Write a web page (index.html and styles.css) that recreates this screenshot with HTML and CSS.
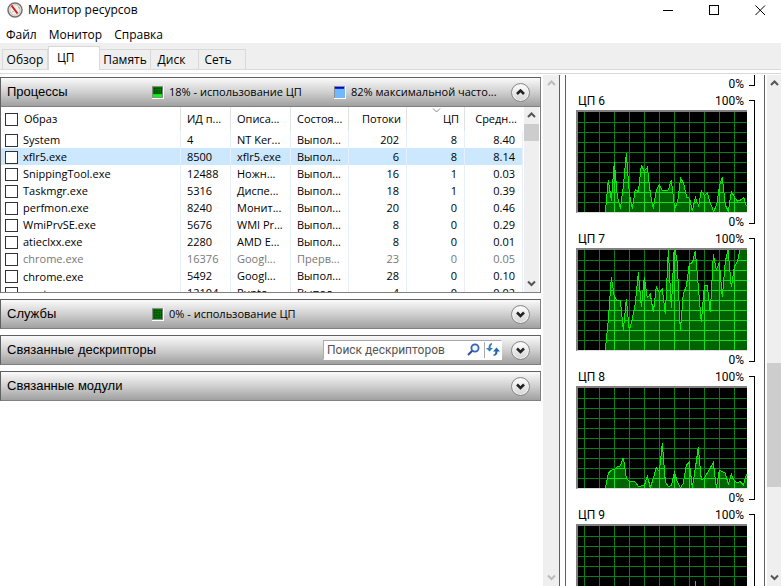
FILE: index.html
```
<!DOCTYPE html>
<html lang="ru">
<head>
<meta charset="utf-8">
<title>Монитор ресурсов</title>
<link rel="stylesheet" href="styles.css">
</head>
<body>
<svg class="defs" aria-hidden="true">
  <defs>
    <path id="grid" d="M19.5 0V300M64.5 0V300M109.5 0V300M154.5 0V300M199.5 0V300M244.5 0V300M289.5 0V300M334.5 0V300M379.5 0V300M424.5 0V300M469.5 0V300M0 31.5H507M0 61.5H507M0 91.5H507M0 121.5H507M0 151.5H507M0 181.5H507M0 211.5H507M0 241.5H507M0 271.5H507"/>
    <path id="down" d="M1 1.5L4.500 5L8 1.500"/>
    <path id="up" d="M1 5L4.500 1.500L8 5"/>
  </defs>
</svg>

<header class="titlebar">
  <svg class="logo" viewBox="0 0 16 16" aria-hidden="true">
    <circle cx="8" cy="8" r="7" fill="#f4f1ee" stroke="#77716f" stroke-width="1.500"/>
    <circle cx="8" cy="8" r="5.200" fill="none" stroke="#cfc4bc"/>
    <path d="M4.500 3.500L10.500 11.500" stroke="#d01c1c" stroke-width="2"/>
    <path d="M5 10.500L6.500 9M11.500 5L12.500 7" stroke="#a9a29c"/>
  </svg>
  <h1>Монитор ресурсов</h1>
  <div class="window-buttons">
    <button aria-label="Свернуть"><svg viewBox="0 0 11 11"><path d="M0 5.500H10"/></svg></button>
    <button aria-label="Развернуть"><svg viewBox="0 0 11 11"><path d="M.5.5H9.500V9.500H.5Z"/></svg></button>
    <button aria-label="Закрыть"><svg viewBox="0 0 11 11"><path d="M.5.5L10 10M10 .5L.5 10" shape-rendering="auto"/></svg></button>
  </div>
</header>

<nav class="menu">
  <button>Файл</button>
  <button>Монитор</button>
  <button>Справка</button>
</nav>

<div class="tabs" role="tablist">
  <button class="tab tab-overview" role="tab">Обзор</button>
  <button class="tab active" role="tab" aria-selected="true">ЦП</button>
  <button class="tab" role="tab">Память</button>
  <button class="tab" role="tab">Диск</button>
  <button class="tab" role="tab">Сеть</button>
</div>
<div class="tab-edge"></div>

<main>
  <div class="groups">
    <section class="group">
      <div class="group-head">
        <h2>Процессы</h2>
        <span class="stat cpu"><svg class="meter" viewBox="0 0 12 13"><path fill="#8b8b8b" d="M0 0H12V13H0Z"/><path fill="#008000" d="M1 1H11V9H1Z"/><path class="dots" d="M2 2.500H11M2 4.500H11M2 6.500H11M2 8.500H11"/><path fill="#00ff00" d="M1 9H11V12H1Z"/></svg>18% - использование ЦП</span>
        <span class="stat"><svg class="meter" viewBox="0 0 12 13"><path fill="#8b8b8b" d="M0 0H12V13H0Z"/><path fill="#70b8ff" d="M1 1H12V13H1Z"/><path fill="#0000d8" d="M1 1H11V3H1Z"/></svg>82% максимальной часто...</span>
        <button class="round" aria-label="Свернуть процессы"><svg viewBox="0 0 9 7"><use href="#up"/></svg></button>
      </div>
      <div class="list">
        <table>
          <colgroup><col><col class="c-pid"><col class="c-desc"><col class="c-num"><col class="c-num"><col class="c-num"><col class="c-num"></colgroup>
          <thead>
            <tr><th><input type="checkbox" aria-label="Все процессы"><span>Образ</span></th><th>ИД п...</th><th>Описа...</th><th>Состоя...</th><th class="n">Потоки</th><th class="n sorted">ЦП<svg viewBox="0 0 9 7"><use href="#down"/></svg></th><th class="n">Средн...</th></tr>
          </thead>
          <tbody>
            <tr><td><input type="checkbox" id="p1"><label for="p1">System</label></td><td>4</td><td>NT Ker...</td><td>Выпол...</td><td class="n">202</td><td class="n">8</td><td class="n">8.40</td></tr>
            <tr class="selected"><td><input type="checkbox" id="p2"><label for="p2">xflr5.exe</label></td><td>8500</td><td>xflr5.exe</td><td>Выпол...</td><td class="n">6</td><td class="n">8</td><td class="n">8.14</td></tr>
            <tr><td><input type="checkbox" id="p3"><label for="p3">SnippingTool.exe</label></td><td>12488</td><td>Ножн...</td><td>Выпол...</td><td class="n">16</td><td class="n">1</td><td class="n">0.03</td></tr>
            <tr><td><input type="checkbox" id="p4"><label for="p4">Taskmgr.exe</label></td><td>5316</td><td>Диспе...</td><td>Выпол...</td><td class="n">18</td><td class="n">1</td><td class="n">0.39</td></tr>
            <tr><td><input type="checkbox" id="p5"><label for="p5">perfmon.exe</label></td><td>8240</td><td>Монит...</td><td>Выпол...</td><td class="n">20</td><td class="n">0</td><td class="n">0.46</td></tr>
            <tr><td><input type="checkbox" id="p6"><label for="p6">WmiPrvSE.exe</label></td><td>5676</td><td>WMI Pr...</td><td>Выпол...</td><td class="n">8</td><td class="n">0</td><td class="n">0.29</td></tr>
            <tr><td><input type="checkbox" id="p7"><label for="p7">atieclxx.exe</label></td><td>2280</td><td>AMD E...</td><td>Выпол...</td><td class="n">8</td><td class="n">0</td><td class="n">0.01</td></tr>
            <tr class="suspended"><td><input type="checkbox" id="p8"><label for="p8">chrome.exe</label></td><td>16376</td><td>Googl...</td><td>Прерв...</td><td class="n">23</td><td class="n">0</td><td class="n">0.05</td></tr>
            <tr><td><input type="checkbox" id="p9"><label for="p9">chrome.exe</label></td><td>5492</td><td>Googl...</td><td>Выпол...</td><td class="n">28</td><td class="n">0</td><td class="n">0.10</td></tr>
            <tr><td><input type="checkbox" id="p10"><label for="p10">punto.exe</label></td><td>12104</td><td>Punto...</td><td>Выпол...</td><td class="n">4</td><td class="n">0</td><td class="n">0.02</td></tr>
          </tbody>
        </table>
        <div class="scroll list-scroll">
          <svg viewBox="0 0 9 7"><use href="#up"/></svg>
          <div class="thumb"></div>
          <svg class="end" viewBox="0 0 9 7"><use href="#down"/></svg>
        </div>
      </div>
    </section>

    <section class="group">
      <div class="group-head">
        <h2>Службы</h2>
        <span class="stat cpu"><svg class="meter" viewBox="0 0 12 13"><path fill="#8b8b8b" d="M0 0H12V13H0Z"/><path fill="#008000" d="M1 1H11V12H1Z"/><path class="dots" d="M2 2.500H11M2 4.500H11M2 6.500H11M2 8.500H11M2 10.500H11"/></svg>0% - использование ЦП</span>
        <button class="round" aria-label="Развернуть службы"><svg viewBox="0 0 9 7"><use href="#down"/></svg></button>
      </div>
    </section>

    <section class="group">
      <div class="group-head">
        <h2>Связанные дескрипторы</h2>
        <div class="search">
          <input type="text" placeholder="Поиск дескрипторов" aria-label="Поиск дескрипторов">
          <button aria-label="Найти"><svg viewBox="0 0 14 14"><circle cx="8" cy="5" r="3.600" fill="#eef5ff" stroke="#3563b5" stroke-width="1.800"/><path d="M5.300 7.800L1 12" stroke="#2d4f9e" stroke-width="2"/></svg></button>
          <button class="refresh" aria-label="Обновить"><svg viewBox="0 0 14 14"><path fill="#2f7fc4" d="M6 0V1.500Q4.500 2 4.500 5H7L3.500 8.500L0 5H2.500Q2.500 .5 6 0Z"/><path fill="#2464b0" d="M7.500 13V11.500Q9.500 11 9.500 8.500H7L10.500 4.500L14 8.500H11.500Q11.500 12.500 7.500 13Z"/></svg></button>
        </div>
        <button class="round" aria-label="Развернуть дескрипторы"><svg viewBox="0 0 9 7"><use href="#down"/></svg></button>
      </div>
    </section>

    <section class="group">
      <div class="group-head">
        <h2>Связанные модули</h2>
        <button class="round" aria-label="Развернуть модули"><svg viewBox="0 0 9 7"><use href="#down"/></svg></button>
      </div>
    </section>
  </div>

  <div class="scroll idle"><svg viewBox="0 0 9 7"><use href="#up"/></svg><svg class="end" viewBox="0 0 9 7"><use href="#down"/></svg></div>

  <aside class="charts">
    <div class="chart-tail"><span>0%</span><i class="bracket"></i></div>

    <figure class="chart">
      <figcaption><span>ЦП 6</span><span>100%</span></figcaption>
      <svg class="plot" viewBox="0 0 507 300" preserveAspectRatio="none">
        <clipPath id="a6"><path id="l6" transform="translate(-54 -126)" d="M136 426L145 330L154 392L163 277L172 380L181 416L190 350L199 250L208 370L217 416L226 358L235 365L244 286L253 303L262 292L271 370L280 416L289 360L298 344L307 363L325 360L334 330L344 416L353 395L362 325L371 340L380 382L389 385L397 424L406 382L416 408L424 362L433 376L442 368L451 400L461 424L470 405L479 345L487 322L496 405L505 424L514 365L524 382L533 394L542 390L551 382L558 405L564 405V430H136Z"/></clipPath>
        <use href="#grid" class="grid"/><g clip-path="url(#a6)"><path class="area" d="M0 0H507V300H0Z"/><use href="#grid" class="grid lit"/></g><use href="#l6" class="line"/>
      </svg>
      <span class="zero">0%</span><i class="bracket"></i>
    </figure>

    <figure class="chart">
      <figcaption><span>ЦП 7</span><span>100%</span></figcaption>
      <svg class="plot" viewBox="0 0 507 300" preserveAspectRatio="none">
        <clipPath id="a7"><path id="l7" transform="translate(-54 -105)" d="M136 405L145 315L154 187L163 245L172 257L181 257L190 345L199 252L208 348L217 310L226 265L235 172L244 275L253 187L262 248L271 238L280 292L289 214L298 233L307 222L316 298L325 105L334 280L343 90L352 145L361 348L370 235L379 215L388 147L397 143L406 107L415 215L424 322L433 212L442 212L451 292L460 118L469 165L478 142L487 247L496 140L504 103L514 217L523 155L532 140L541 100H564V410H136Z"/></clipPath>
        <use href="#grid" class="grid"/><g clip-path="url(#a7)"><path class="area" d="M0 0H507V300H0Z"/><use href="#grid" class="grid lit"/></g><use href="#l7" class="line"/>
      </svg>
      <span class="zero">0%</span><i class="bracket"></i>
    </figure>

    <figure class="chart">
      <figcaption><span>ЦП 8</span><span>100%</span></figcaption>
      <svg class="plot" viewBox="0 0 507 300" preserveAspectRatio="none">
        <clipPath id="a8"><path id="l8" transform="translate(-54 -99)" d="M136 399L145 355L154 346L163 343L172 335L181 333L190 308L199 370L208 379L226 381L235 394L253 392L262 363L271 398L280 370L289 337L298 350L307 265L316 380L325 395L334 392L343 352L352 380L361 398L370 385L379 330L388 322L397 398L406 340L415 277L424 375L433 370L460 322L469 398L478 346L496 355L505 388L514 358L523 378L532 383L541 380L550 390L558 363L564 350V404H136Z"/></clipPath>
        <use href="#grid" class="grid"/><g clip-path="url(#a8)"><path class="area" d="M0 0H507V300H0Z"/><use href="#grid" class="grid lit"/></g><use href="#l8" class="line"/>
      </svg>
      <span class="zero">0%</span><i class="bracket"></i>
    </figure>

    <figure class="chart">
      <figcaption><span>ЦП 9</span><span>100%</span></figcaption>
      <svg class="plot" viewBox="0 0 507 300" preserveAspectRatio="none">
        <use href="#grid" class="grid"/><path class="line" d="M345 290L352 166L360 290"/>
      </svg>
      <span class="zero">0%</span><i class="bracket"></i>
    </figure>
  </aside>

  <div class="scroll page-scroll"><svg viewBox="0 0 9 7"><use href="#up"/></svg><div class="thumb"></div><svg class="end" viewBox="0 0 9 7"><use href="#down"/></svg></div>
</main>
</body>
</html>
```
FILE: styles.css
```
* { box-sizing: border-box; }

body {
  margin: 0;
  height: 100vh;
  overflow: hidden;
  display: flex;
  flex-direction: column;
  background: #fff;
  color: #000;
  font: 12px/16px "Open Sans", "Noto Sans", sans-serif;
}

button, input { font: inherit; color: inherit; margin: 0; padding: 0; }
button { border: 0; background: none; }
h1, h2, figure { margin: 0; font-size: inherit; font-weight: normal; }
svg { display: block; flex: none; }
.defs { position: absolute; width: 0; height: 0; }

/* Title bar and menu */
.titlebar { display: flex; align-items: center; height: 20px; padding-left: 7px; }
.logo { width: 16px; height: 16px; margin-right: 5px; }
.window-buttons { display: flex; margin-left: auto; }
.window-buttons button { width: 46px; height: 18px; padding-left: 4px; display: grid; place-items: center; }
.window-buttons svg {
  width: 11px; height: 11px;
  fill: none; stroke: #000;
  shape-rendering: crispEdges;
}
.menu { display: flex; gap: 12px; height: 23px; padding: 7px 6px 0; }
.menu button { height: 16px; }

/* Tabs */
.tabs {
  display: flex;
  align-items: flex-end;
  height: 27px;
  padding-left: 2px;
  background: #efefef;
  border-bottom: 1px solid #d9d9d9;
}
.tab {
  height: 20px;
  width: 47px;
  border: 1px solid #d9d9d9;
  border-width: 1px 1px 0 0;
}
.tab-overview { width: 46px; border-left-width: 1px; }
.tab:nth-child(4) { width: 48px; padding-right: 6px; }
.tab:nth-child(3) { width: 51px; }
.tab:nth-child(5) { padding-right: 8px; }
.tab.active {
  width: 52px;
  height: 24px;
  margin-bottom: -1px;
  padding: 0 0 2px 8px;
  border-left-width: 1px;
  text-align: left;
  background: #fff;
}
.tab-edge { height: 4px; flex: none; border-bottom: 1px solid #d9d9d9; }

main { flex: 1; min-height: 0; display: flex; padding-top: 1px; }

/* Groups */
.groups {
  flex: 1;
  min-width: 0;
  display: flex;
  flex-direction: column;
  gap: 6px;
  padding: 2px 2px 0 0;
}
.group { border: 1px solid #606060; border-right-color: #808080; border-bottom-color: #808080; }
.group-head {
  display: flex;
  align-items: center;
  height: 28px;
  padding: 0 10px 0 6px;
  background: linear-gradient(#fafafa, #d0d0d0 50%, #a0a0a0);
  font-size: 11px;
}
.group-head h2 { width: 145px; flex: none; white-space: nowrap; font: 13px/16px "Liberation Sans", sans-serif; }
.stat { display: flex; align-items: center; white-space: nowrap; }
.stat.cpu { width: 182px; }
.meter { width: 12px; height: 13px; margin-right: 5px; border: 0 solid #fff; border-width: 0 1px 1px 0; }
.dots { stroke: #001800; stroke-dasharray: 1 1; }
.round {
  width: 19px; height: 19px;
  flex: none;
  margin-left: auto;
  display: grid;
  place-items: center;
  border: 1px solid #888;
  border-radius: 50%;
  background: linear-gradient(#fff, #d4d4d4);
  box-shadow: inset 0 0 0 1px #f3f3f3;
}
.round svg { width: 9px; height: 7px; fill: none; stroke: #222; stroke-width: 2.500; }

.search {
  display: flex;
  align-items: center;
  width: 179px;
  height: 20px;
  margin-left: auto;
  border: 1px solid #aaa;
  border-color: #aaa #fff #fff #aaa;
  background: #fff;
}
.search + .round { margin-left: 9px; }
.search input { flex: 1; min-width: 0; height: 18px; border: 0; padding-left: 3px; font: 12px/16px Roboto, sans-serif; background: none; }
.search input::placeholder { color: #555; opacity: 1; }
.search button { width: 20px; height: 16px; display: grid; place-items: center; }
.search svg { width: 14px; height: 14px; fill: none; }
.search .refresh { width: 17px; border-left: 1px solid #aaa; }

/* Process table */
.list { display: flex; height: 186px; border-top: 1px solid #808080; overflow: hidden; background: #fff; font-size: 11px; }
table { flex: 1; width: 0; height: 194px; table-layout: fixed; border-collapse: separate; border-spacing: 0; }
.c-pid { width: 50px; }
.c-desc { width: 60px; }
.c-num { width: 58px; }
th, td {
  height: 17px;
  padding: 0 0 0 6px;
  border-right: 1px solid #e6effc;
  font-weight: normal;
  line-height: 16px;
  text-align: left;
  white-space: nowrap;
  overflow: hidden;
}
th { height: 24px; border-color: #e2e2e2; }
th:first-child, td:first-child { padding-left: 4px; }
th:last-child { border-color: #fff; }
.n { text-align: right; padding: 0 7px 0 0; }
th.n { padding-right: 5px; }
.sorted { position: relative; }
.sorted svg { position: absolute; top: 0; left: 25px; width: 9px; height: 7px; fill: none; stroke: #888; }
td input, th input {
  appearance: none;
  width: 13px; height: 13px;
  margin-right: 5px;
  border: 1px solid #333;
  background: #fff;
  vertical-align: middle;
}
th input { margin-right: 6px; }
td label, th span { vertical-align: middle; }
.selected td { background: #cce8ff; }
.suspended { color: #777; }

/* Scroll bars */
.scroll {
  display: flex;
  flex-direction: column;
  align-items: center;
  flex: none;
  width: 16px;
  background: #efefef;
}
.scroll svg { width: 9px; height: 7px; margin-top: 5px; fill: none; stroke: #555; stroke-width: 2; }
.scroll .end { margin: auto 0 5px; }
.thumb { width: 100%; background: #cdcdcd; }
.list-scroll { margin: 0 1px; width: 15px; }
.list-scroll .thumb { height: 17px; margin-top: 5px; }
.idle svg { stroke: #bcbcbc; }
.page-scroll { width: 14px; margin-left: 2px; }
.page-scroll .thumb { height: 124px; margin-top: 276px; }

/* Processor charts */
.charts {
  width: 206px;
  flex: none;
  padding-left: 5px;
  border: solid #606060;
  border-width: 0 1px;
  overflow: hidden;
  font: 12px/16px Roboto, sans-serif;
}
.chart-tail, .chart {
  position: relative;
  padding-left: 10px;
  border-left: 1px solid #606060;
}
.chart-tail { height: 18px; }
.chart-tail span, .zero { display: block; width: 168px; text-align: right; height: 18px; line-height: 18px; }
.chart figcaption { display: flex; justify-content: space-between; width: 168px; height: 17px; padding-left: 2px; }
.plot {
  width: 171px;
  height: 103px;
  background: #000;
  border: solid #808080;
  border-width: 2px 0 1px 2px;
  border-bottom-color: #ddd;
  shape-rendering: crispEdges;
}
.bracket {
  position: absolute;
  top: 7px;
  right: 9px;
  width: 6px;
  height: 124px;
  border: 1px solid #000;
  border-left: 0;
}
.chart-tail .bracket { top: 0; height: 11px; border-top: 0; }
.grid { fill: none; stroke: #088018; stroke-width: 3; }
.lit { stroke: #10e020; }
.area { fill: #006400; }
.line { fill: none; stroke: #00f000; stroke-width: 3; }
```
